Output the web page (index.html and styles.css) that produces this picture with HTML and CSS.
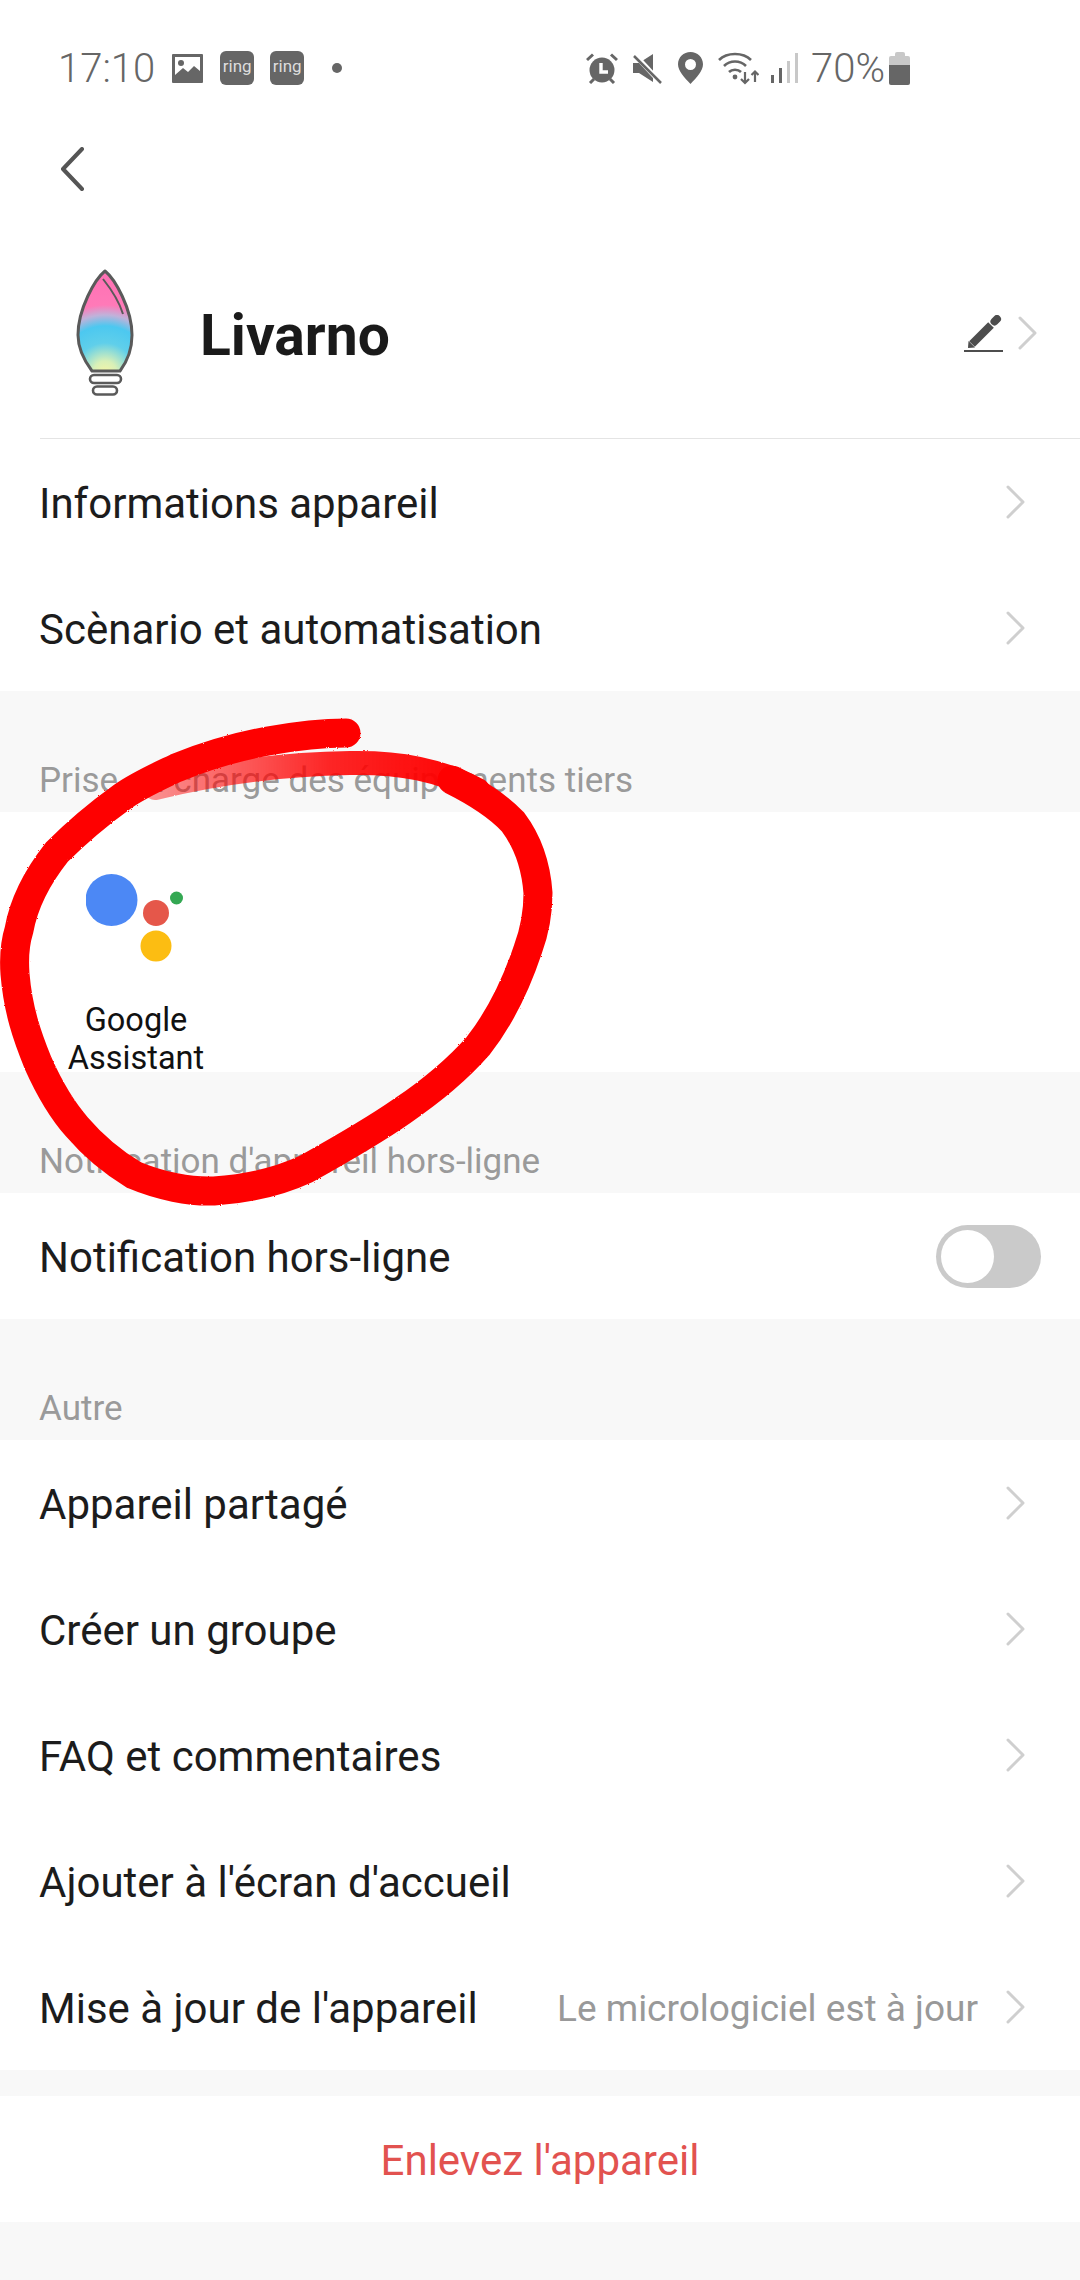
FILE: index.html
```html
<!DOCTYPE html>
<html lang="fr">
<head>
    <meta charset="UTF-8">
    <meta name="viewport" content="width=device-width, initial-scale=1.0">
    <title>Livarno</title>
    <link rel="stylesheet" href="styles.css">
</head>
<body>
    <svg class="defs" width="0" height="0">
        <symbol id="chev" viewBox="0 0 20 34">
            <path d="M2 2 L17 17 L2 32" fill="none" stroke="#cfcfcf" stroke-width="3" stroke-linecap="round" stroke-linejoin="round"/>
        </symbol>
    </svg>

    <div class="status">
        <div class="status-left">
            <span class="clock">17:10</span>
            <svg class="ic-image" viewBox="0 0 31 29">
                <path fill="#666" fill-rule="evenodd" d="M1 0h29a1 1 0 0 1 1 1v27a1 1 0 0 1-1 1H1a1 1 0 0 1-1-1V1a1 1 0 0 1 1-1zM3 3v18l8-7 5 4 6-6 6 5V3z"/>
                <circle cx="9" cy="9" r="3" fill="#666"/>
            </svg>
            <span class="ring">ring</span>
            <span class="ring">ring</span>
            <span class="dot"></span>
        </div>
        <div class="status-right">
            <svg class="ic-alarm" viewBox="0 0 32 31">
                <circle cx="16" cy="17" r="12.5" fill="#666"/>
                <path d="M1 7 L7 1.5 M31 7 L25 1.5 M4 30 L8 26 M28 30 L24 26" stroke="#666" stroke-width="3" fill="none"/>
                <path d="M15 10 V19 H22" stroke="#fff" stroke-width="3.4" fill="none"/>
            </svg>
            <svg class="ic-mute" viewBox="0 0 30 31">
                <path fill="#666" d="M0 10h6L20 1v28L6 20H0z"/>
                <path d="M2 2 L28 30" stroke="#fff" stroke-width="5"/>
                <path d="M1 3 L28 30" stroke="#666" stroke-width="2.5"/>
            </svg>
            <svg class="ic-pin" viewBox="0 0 25 32">
                <path fill="#666" fill-rule="evenodd" d="M12.500 0C5.600 0 0 5.400 0 12.200 0 19 6.500 25.500 12.500 32 18.500 25.500 25 19 25 12.200 25 5.400 19.400 0 12.500 0zM12.500 7a5.500 5.500 0 1 1 0 11 5.500 5.500 0 0 1 0-11z"/>
            </svg>
            <svg class="ic-wifi" viewBox="0 0 41 33">
                <g fill="none" stroke="#666" stroke-width="2.6">
                    <path d="M1 8 C9 0 25 0 33 8"/>
                    <path d="M6 14 C12 8 22 8 28 14"/>
                    <path d="M11 20 C14 17 20 17 23 20"/>
                    <path d="M27 20 V31 M23 27 L27 31 L31 27" stroke-width="2.2"/>
                    <path d="M37 30 V20 M33.500 23 L37 19.500 L40.500 23" stroke-width="2.2"/>
                </g>
                <circle cx="17" cy="25" r="2.400" fill="#666"/>
            </svg>
            <svg class="ic-signal" viewBox="0 0 27 30">
                <rect x="0" y="22" width="3" height="8" fill="#666"/>
                <rect x="8" y="15" width="3" height="15" fill="#666"/>
                <rect x="16" y="8" width="3" height="22" fill="#c8c8c8"/>
                <rect x="24" y="0" width="3" height="30" fill="#c8c8c8"/>
            </svg>
            <span class="percent">70%</span>
            <span class="battery"><span class="battery-cap"></span><span class="battery-top"></span><span class="battery-fill"></span></span>
        </div>
    </div>

    <div class="nav">
        <svg class="back" viewBox="0 0 25 44">
            <path d="M22 2 L3 22 L22 42" fill="none" stroke="#555" stroke-width="4" stroke-linecap="round" stroke-linejoin="round"/>
        </svg>
    </div>

    <div class="device">
        <svg class="bulb" viewBox="0 0 60 128">
            <defs>
                <radialGradient id="glow" gradientUnits="userSpaceOnUse" cx="30" cy="104" r="100">
                    <stop offset="0" stop-color="#f6f6a6"/>
                    <stop offset="0.12" stop-color="#d8f0b8"/>
                    <stop offset="0.3" stop-color="#60cfea"/>
                    <stop offset="0.47" stop-color="#4cc8f0"/>
                    <stop offset="0.58" stop-color="#c0b2da"/>
                    <stop offset="0.68" stop-color="#ff7ab8"/>
                    <stop offset="1" stop-color="#ff70b4"/>
                </radialGradient>
            </defs>
            <path d="M30 2 C20 10 3 40 3 66 C3 82 11 94 17 102 H45 C51 94 57 82 57 66 C57 40 40 10 30 2Z" fill="url(#glow)" stroke="#5a5a5a" stroke-width="3" stroke-linejoin="round"/>
            <path d="M28 10 C36 20 44 32 48 45" fill="none" stroke="#5a5a5a" stroke-width="2"/>
            <rect x="15" y="106" width="31" height="8" rx="4" fill="#fff" stroke="#5a5a5a" stroke-width="2.600"/>
            <rect x="18" y="117.500" width="24" height="8" rx="4" fill="#fff" stroke="#5a5a5a" stroke-width="2.600"/>
        </svg>
        <h1 class="device-name">Livarno</h1>
        <svg class="pencil" viewBox="0 0 39 37">
            <path d="M8 29 L27 10" stroke="#4d4d4d" stroke-width="8" fill="none"/>
            <path d="M4 33 L4.500 26 L11 32.500z" fill="#4d4d4d"/>
            <path d="M30.500 6.500 L33 4" stroke="#4d4d4d" stroke-width="8" stroke-linecap="round" fill="none"/>
            <rect x="0" y="35" width="39" height="2" fill="#4d4d4d"/>
        </svg>
        <svg class="chev"><use href="#chev"/></svg>
    </div>

    <div class="group group-first">
        <div class="row"><span class="row-label">Informations appareil</span><svg class="chev"><use href="#chev"/></svg></div>
        <div class="row"><span class="row-label">Scènario et automatisation</span><svg class="chev"><use href="#chev"/></svg></div>
    </div>

    <div class="section-title">Prise en charge des équipements tiers</div>
    <div class="tiles">
        <div class="tile">
            <svg class="assistant" viewBox="0 0 100 92">
                <circle cx="25.500" cy="26" r="26" fill="#4c88f5"/>
                <circle cx="70" cy="39" r="13" fill="#e5574a"/>
                <circle cx="90.500" cy="24" r="6.500" fill="#34a853"/>
                <circle cx="70" cy="72" r="15.500" fill="#fcbd12"/>
            </svg>
            <span class="tile-label">Google Assistant</span>
        </div>
    </div>

    <div class="section-title">Notification d'appareil hors-ligne</div>
    <div class="group">
        <div class="row">
            <span class="row-label">Notification hors-ligne</span>
            <span class="toggle"><span class="knob"></span></span>
        </div>
    </div>

    <div class="section-title">Autre</div>
    <div class="group">
        <div class="row"><span class="row-label">Appareil partagé</span><svg class="chev"><use href="#chev"/></svg></div>
        <div class="row"><span class="row-label">Créer un groupe</span><svg class="chev"><use href="#chev"/></svg></div>
        <div class="row"><span class="row-label">FAQ et commentaires</span><svg class="chev"><use href="#chev"/></svg></div>
        <div class="row"><span class="row-label">Ajouter à l'écran d'accueil</span><svg class="chev"><use href="#chev"/></svg></div>
        <div class="row">
            <span class="row-label">Mise à jour de l'appareil</span>
            <span class="row-value">Le micrologiciel est à jour</span>
            <svg class="chev"><use href="#chev"/></svg>
        </div>
    </div>

    <div class="remove">Enlevez l'appareil</div>

    <!-- red marker circle drawn over the screenshot -->
    <svg class="scribble" viewBox="0 0 600 1300">
        <defs>
            <filter id="rough" x="-5%" y="-5%" width="110%" height="110%">
                <feTurbulence type="fractalNoise" baseFrequency="0.7" numOctaves="2" seed="4"/>
                <feDisplacementMap in="SourceGraphic" scale="2"/>
            </filter>
            <linearGradient id="fade" gradientUnits="userSpaceOnUse" x1="480" y1="0" x2="145" y2="0">
                <stop offset="0" stop-color="#fe0000"/>
                <stop offset="0.45" stop-color="#fe0000" stop-opacity="0.85"/>
                <stop offset="1" stop-color="#fe0000" stop-opacity="0.4"/>
            </linearGradient>
        </defs>
        <g fill="none" stroke-linecap="round" stroke-linejoin="round" filter="url(#rough)">
            <path d="M478 790 C440 770 400 762 350 763 C290 764 220 772 155 788" stroke="url(#fade)" stroke-width="24"/>
            <path d="M346 733 C320 733 296 736 268 741 C230 748 205 756 176 768 C155 778 137 786 122 797 C97 815 75 834 57 852 C38 876 24 902 19 930 C14 946 14 960 15 974 C18 1010 27 1036 38 1063 C50 1090 62 1110 77 1127 C95 1148 114 1163 134 1175 C160 1186 190 1192 214 1191 C245 1189 278 1182 306 1169 C340 1150 372 1132 402 1111 C430 1092 456 1071 478 1046 C500 1018 516 985 528 949 C535 930 538 912 538 893 C536 865 528 842 513 822 C498 806 480 794 452 780" stroke="#fe0000" stroke-width="29"/>
        </g>
    </svg>
</body>
</html>
```

FILE: styles.css
```css
html, body {
    margin: 0;
    padding: 0;
}
body {
    position: relative;
    width: 1080px;
    height: 2280px;
    overflow: hidden;
    font-family: Roboto, "Liberation Sans", sans-serif;
    background-color: #f8f8f8;
    color: #1c1c1c;
}
.defs {
    position: absolute;
}

/* status bar */
.status {
    height: 136px;
    display: flex;
    justify-content: space-between;
    align-items: center;
    padding: 0 170px 0 58px;
    background-color: #fff;
    color: #666;
}
.status-left, .status-right {
    display: flex;
    align-items: center;
}
.clock, .percent {
    font-size: 40px;
    font-weight: 300;
}
.clock {
    margin-right: 17px;
}
.ic-image {
    width: 31px;
    height: 29px;
    margin-right: 17px;
}
.ring {
    width: 34px;
    height: 34px;
    margin-right: 16px;
    border-radius: 6px;
    background-color: #666;
    color: #ddd;
    font-size: 17px;
    line-height: 31px;
    text-align: center;
}
.dot {
    width: 10px;
    height: 10px;
    margin-left: 12px;
    border-radius: 50%;
    background-color: #666;
}
.ic-alarm {
    width: 32px;
    height: 31px;
    margin-right: 15px;
}
.ic-mute {
    width: 30px;
    height: 31px;
    margin-right: 15px;
}
.ic-pin {
    width: 25px;
    height: 32px;
    margin-right: 15px;
}
.ic-wifi {
    width: 41px;
    height: 33px;
    margin-right: 12px;
}
.ic-signal {
    width: 27px;
    height: 30px;
    margin-right: 13px;
}
.percent {
    margin-right: 4px;
}
.battery {
    display: flex;
    flex-direction: column;
    align-items: center;
    width: 21px;
}
.battery-cap {
    width: 10px;
    height: 4px;
    border-radius: 2px 2px 0 0;
    background-color: #c8c8c8;
}
.battery-top {
    width: 21px;
    height: 9px;
    border-radius: 2px 2px 0 0;
    background-color: #c8c8c8;
}
.battery-fill {
    width: 21px;
    height: 20px;
    border-radius: 0 0 2px 2px;
    background-color: #666;
}

/* back arrow */
.nav {
    height: 66px;
    display: flex;
    align-items: center;
    padding-left: 60px;
    background-color: #fff;
}
.back {
    width: 25px;
    height: 44px;
}

/* device header */
.device {
    height: 206px;
    display: flex;
    align-items: center;
    padding: 28px 42px 2px 35px;
    margin-left: 40px;
    background-color: #fff;
    border-bottom: 1px solid #e4e4e4;
    box-shadow: -40px 0 0 #fff;
}
.bulb {
    width: 60px;
    height: 128px;
    margin-right: 65px;
}
.device-name {
    flex: 1;
    margin: 0;
    padding-top: 5px;
    font-size: 57px;
    font-weight: 700;
    color: #1a1a1a;
}
.pencil {
    width: 39px;
    height: 37px;
    margin: 0 15px 0 0;
}
.chev {
    width: 20px;
    height: 34px;
}

/* rows */
.group {
    background-color: #fff;
}
.row {
    height: 126px;
    display: flex;
    align-items: center;
    padding: 0 54px 0 39px;
    font-size: 42px;
}
.row-label {
    flex: 1;
    padding-top: 2px;
}
.row-value {
    margin-right: 28px;
    padding-top: 2px;
    font-size: 37px;
    color: #999;
}
.section-title {
    height: 121px;
    box-sizing: border-box;
    padding: 66px 0 0 39px;
    font-size: 35px;
    line-height: 48px;
    color: #9a9a9a;
}

/* third party tiles */
.tiles {
    height: 260px;
    display: flex;
    background-color: #fff;
}
.tile {
    width: 200px;
    margin-left: 36px;
    padding-top: 62px;
    display: flex;
    flex-direction: column;
    align-items: center;
    text-align: center;
}
.assistant {
    flex-shrink: 0;
    width: 100px;
    height: 92px;
    margin-bottom: 35px;
}
.tile-label {
    flex-shrink: 0;
    width: 160px;
    font-size: 32.5px;
    line-height: 38px;
    color: #111;
}

/* switch */
.toggle {
    width: 105px;
    height: 63px;
    margin-right: -15px;
    box-sizing: border-box;
    padding: 5px;
    border-radius: 32px;
    background-color: #cacaca;
}
.knob {
    display: block;
    width: 53px;
    height: 53px;
    border-radius: 50%;
    background-color: #fff;
}

.remove {
    height: 126px;
    margin-top: 26px;
    background-color: #fff;
    font-size: 42px;
    line-height: 130px;
    text-align: center;
    color: #e2524f;
}

.scribble {
    position: absolute;
    top: 0;
    left: 0;
    width: 600px;
    height: 1300px;
    pointer-events: none;
}
```
